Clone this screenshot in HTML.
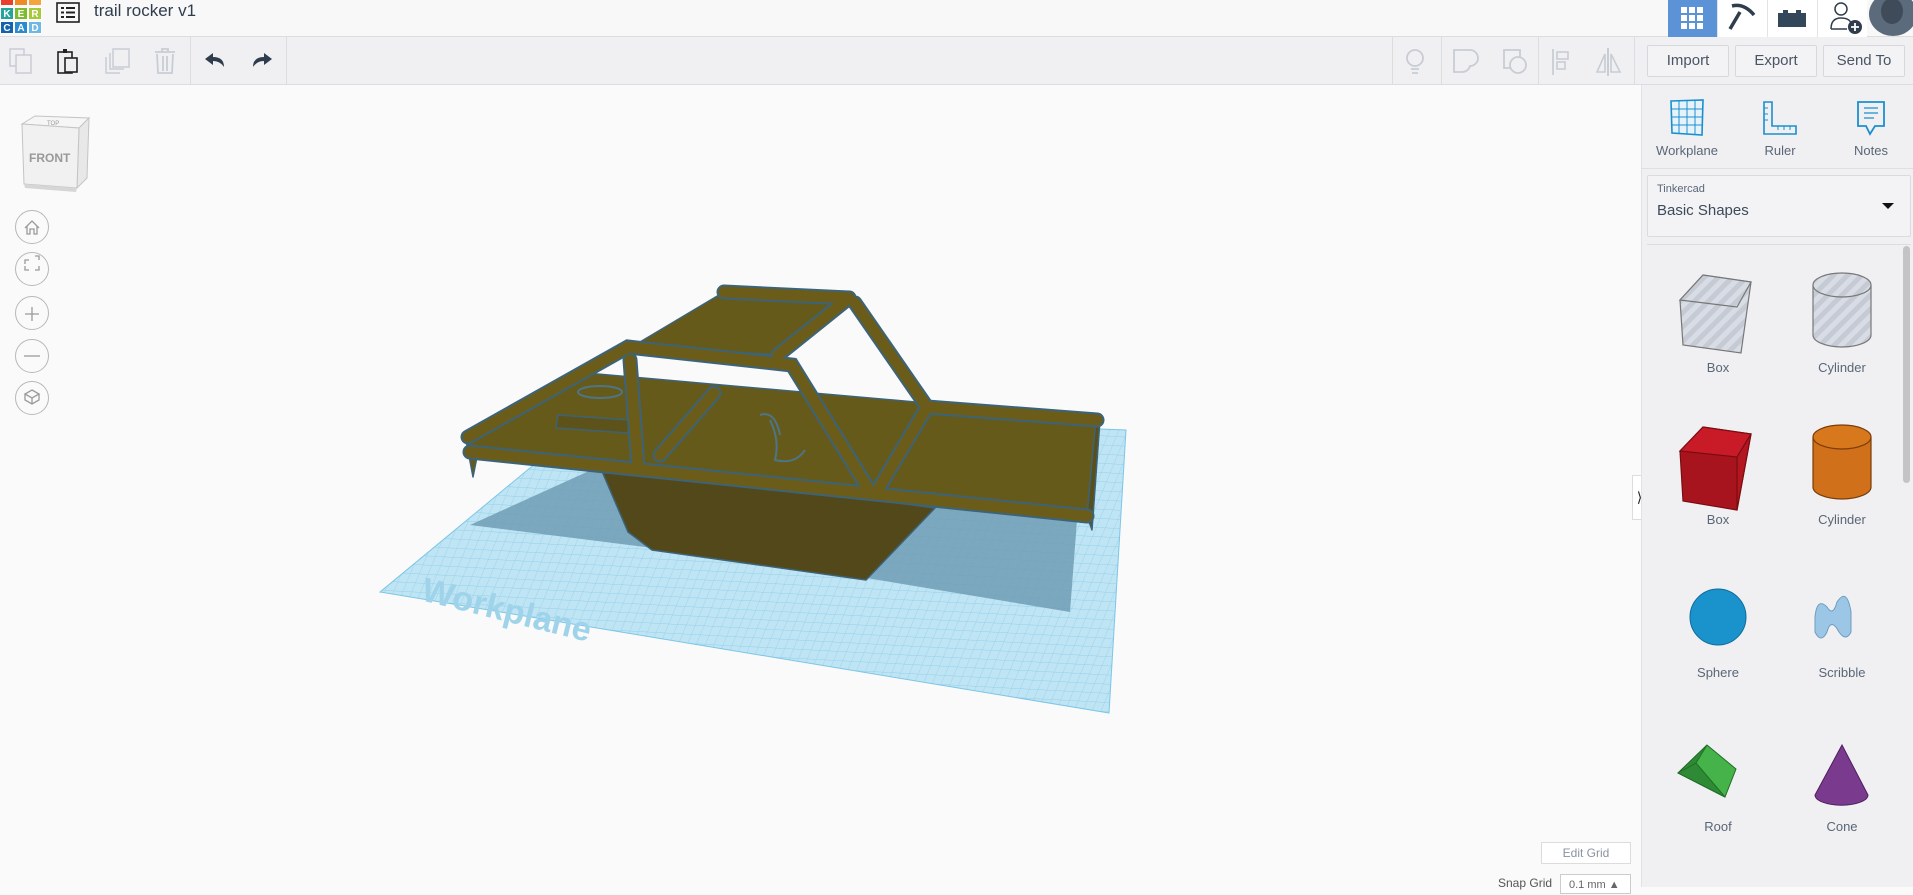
<!DOCTYPE html>
<html><head><meta charset="utf-8">
<style>
*{box-sizing:border-box;margin:0;padding:0}
body{width:1913px;height:887px;overflow:hidden;background:#fafafa;font-family:"Liberation Sans",sans-serif;position:relative;color:#3c4a5a}
.abs{position:absolute}
#top{left:0;top:0;width:1913px;height:37px;background:#f8f8f8;border-bottom:1px solid #dcdde0}
#tool{left:0;top:37px;width:1913px;height:48px;background:#f0f0f3;border-bottom:1px solid #dcdde0}
.tile{position:absolute;width:14px;height:13px;color:#fff;font-size:10px;font-weight:bold;text-align:center;line-height:13px;border:1px solid #fff}
.btn{position:absolute;top:45px;height:32px;border:1px solid #d6d8dc;border-radius:2px;background:#f3f3f6;font-size:15px;color:#4a5564;text-align:center;line-height:30px}
#panel{left:1641px;top:85px;width:272px;height:802px;background:#f0f0f3;border-left:1px solid #e2e2e6}
.lbl{position:absolute;font-size:13px;color:#5a6676;text-align:center;width:120px}
.circ{position:absolute;left:15px;width:34px;height:34px;border:1px solid #b8b8b8;border-radius:50%;background:#fafafa}
.sep{position:absolute;top:37px;width:1px;height:48px;background:#dcdde0}
</style></head><body>
<div id="top" class="abs"></div>
<div class="tile" style="left:0;top:-7px;background:#e8402d"></div>
<div class="tile" style="left:14px;top:-7px;background:#f08a24"></div>
<div class="tile" style="left:28px;top:-7px;background:#f4a43a"></div>
<div class="tile" style="left:0;top:7px;background:#26a39c">K</div>
<div class="tile" style="left:14px;top:7px;background:#7dbb2f">E</div>
<div class="tile" style="left:28px;top:7px;background:#a6c93a">R</div>
<div class="tile" style="left:0;top:21px;background:#1464ad">C</div>
<div class="tile" style="left:14px;top:21px;background:#2a8bd0">A</div>
<div class="tile" style="left:28px;top:21px;background:#6db8e4">D</div>
<svg class="abs" style="left:56px;top:2px" width="24" height="21" viewBox="0 0 24 21"><rect x="1" y="1" width="22" height="19" fill="none" stroke="#222" stroke-width="1.6"/><path d="M5 6h3M10 6h9M5 10.5h3M10 10.5h9M5 15h3M10 15h9" stroke="#222" stroke-width="2"/></svg>
<div class="abs" style="left:94px;top:1px;font-size:17px;color:#2f3d4d">trail rocker v1</div>
<!-- top right -->
<div class="abs" style="left:1668px;top:0;width:49px;height:37px;background:#5b93d6"></div>
<svg class="abs" style="left:1680px;top:6px" width="26" height="24"><g fill="#fff"><rect x="1" y="1" width="6" height="6"/><rect x="9" y="1" width="6" height="6"/><rect x="17" y="1" width="6" height="6"/><rect x="1" y="9" width="6" height="6"/><rect x="9" y="9" width="6" height="6"/><rect x="17" y="9" width="6" height="6"/><rect x="1" y="17" width="6" height="6"/><rect x="9" y="17" width="6" height="6"/><rect x="17" y="17" width="6" height="6"/></g></svg>
<div class="abs" style="left:1717px;top:0;width:50px;height:37px;background:#fff;border-left:1px solid #e4e4e4"></div>
<svg class="abs" style="left:1726px;top:3px" width="32" height="30"><path d="M6 3 Q18 0 28 12 M14 9 L4 26" stroke="#2f3d4d" stroke-width="3.5" fill="none"/></svg>
<div class="abs" style="left:1767px;top:0;width:50px;height:37px;background:#fff;border-left:1px solid #e4e4e4"></div>
<svg class="abs" style="left:1778px;top:9px" width="28" height="18"><path d="M0 4h5V1h5v3h8V1h5v3h5v14H0z" fill="#33475b"/></svg>
<div class="abs" style="left:1817px;top:0;width:50px;height:37px;background:#fff;border-left:1px solid #e4e4e4"></div>
<svg class="abs" style="left:1829px;top:1px" width="34" height="34"><circle cx="12" cy="8" r="6" fill="none" stroke="#2f3d4d" stroke-width="1.5"/><path d="M2 28 Q2 17 12 17 Q20 17 22 22 M2 28h16" fill="none" stroke="#2f3d4d" stroke-width="1.5"/><circle cx="26" cy="26" r="7" fill="#2f3d4d"/><path d="M26 22v8M22 26h8" stroke="#fff" stroke-width="1.8"/></svg>
<div class="abs" style="left:1869px;top:-8px;width:48px;height:44px;border-radius:50%;background:#5c6b7c;overflow:hidden"><div style="margin:6px 0 0 12px;width:22px;height:26px;border-radius:50%;background:#3f4b58"></div></div>
<!-- toolbar -->
<div id="tool" class="abs"></div>
<svg class="abs" style="left:8px;top:47px" width="28" height="28"><rect x="2" y="2" width="14" height="17" fill="none" stroke="#c8cdd4" stroke-width="1.5"/><rect x="8" y="8" width="15" height="18" fill="#f0f0f3" stroke="#c8cdd4" stroke-width="1.5"/></svg>
<svg class="abs" style="left:56px;top:47px" width="26" height="28"><rect x="2" y="5" width="14" height="21" fill="none" stroke="#222" stroke-width="1.6"/><rect x="7" y="2" width="4" height="4" fill="#222"/><rect x="9" y="11" width="12" height="14" fill="#f0f0f3" stroke="#222" stroke-width="1.6"/></svg>
<svg class="abs" style="left:103px;top:47px" width="28" height="28"><rect x="10" y="2" width="16" height="18" fill="none" stroke="#c8cdd4" stroke-width="1.5"/><path d="M7 6v16h14M3 10v16h14" fill="none" stroke="#c8cdd4" stroke-width="1.5"/></svg>
<svg class="abs" style="left:152px;top:46px" width="26" height="30"><path d="M3 6h20M10 6V3h6v3M5 8l1 19h14l1-19M11 10v15M15 10v15" fill="none" stroke="#c8cdd4" stroke-width="1.8"/></svg>
<div class="sep" style="left:190px"></div>
<svg class="abs" style="left:203px;top:51px" width="24" height="20"><path d="M2 8 L10 2 V6 Q21 6 21 16 Q17 10 10 10 V14z" fill="#2f3d4d"/></svg>
<svg class="abs" style="left:250px;top:51px" width="24" height="20"><path d="M22 8 L14 2 V6 Q3 6 3 16 Q7 10 14 10 V14z" fill="#2f3d4d"/></svg>
<div class="sep" style="left:286px"></div>
<svg class="abs" style="left:1403px;top:47px" width="24" height="30"><circle cx="12" cy="11" r="8" fill="none" stroke="#c8cdd4" stroke-width="1.8"/><path d="M8 22h8M9 26h6" stroke="#c8cdd4" stroke-width="1.8"/></svg>
<div class="sep" style="left:1392px"></div><div class="sep" style="left:1441px"></div>
<svg class="abs" style="left:1452px;top:48px" width="28" height="28"><path d="M2 2h16a8 8 0 0 1-0 16 8 8 0 0 1-8 6H2z" fill="none" stroke="#c8cdd4" stroke-width="1.8"/></svg>
<svg class="abs" style="left:1502px;top:48px" width="28" height="28"><rect x="2" y="2" width="16" height="18" fill="none" stroke="#c8cdd4" stroke-width="1.8"/><circle cx="16" cy="17" r="8" fill="#f0f0f3" stroke="#c8cdd4" stroke-width="1.8"/></svg>
<div class="sep" style="left:1538px"></div>
<svg class="abs" style="left:1551px;top:48px" width="24" height="28"><path d="M2 1v26" stroke="#c8cdd4" stroke-width="1.8"/><rect x="6" y="4" width="11" height="7" fill="none" stroke="#c8cdd4" stroke-width="1.6"/><rect x="6" y="14" width="8" height="7" fill="none" stroke="#c8cdd4" stroke-width="1.6"/></svg>
<svg class="abs" style="left:1594px;top:46px" width="30" height="32"><path d="M14 2v28" stroke="#c8cdd4" stroke-width="2"/><path d="M11 8 L3 26h8z M17 8 L26 26h-9z" fill="none" stroke="#c8cdd4" stroke-width="1.6"/></svg>
<div class="sep" style="left:1634px"></div>
<div class="btn" style="left:1647px;width:82px">Import</div>
<div class="btn" style="left:1735px;width:82px">Export</div>
<div class="btn" style="left:1823px;width:82px">Send To</div>
<!-- left controls -->
<svg class="abs" style="left:17px;top:112px" width="78" height="85"><path d="M5 12 L18 4 L72 6 L62 16z" fill="#f6f6f6" stroke="#c4c4c4"/><path d="M62 16 L72 6 L70 66 L60 76z" fill="#e8e8e8" stroke="#c4c4c4"/><path d="M5 12 L62 16 L60 76 L7 72z" fill="#f1f1f1" stroke="#c4c4c4"/><path d="M7 72 L60 76 L59 80 L8 76z" fill="#d6d6d6"/><text x="12" y="50" font-size="12" font-weight="bold" fill="#999" font-family="Liberation Sans">FRONT</text><text x="30" y="13" font-size="6" fill="#999">TOP</text></svg>
<div class="circ" style="top:210px"></div><div class="circ" style="top:252px"></div><div class="circ" style="top:296px"></div><div class="circ" style="top:339px"></div><div class="circ" style="top:381px"></div>
<svg class="abs" style="left:15px;top:210px" width="34" height="210" fill="none" stroke="#9a9a9a" stroke-width="1.3"><path d="M10 18 L17 11 L24 18 M12 16v8h3v-5h4v5h3v-8"/><path d="M10 54v-4h4M20 46h4v4M24 56v4h-4M14 60h-4v-4"/><path d="M17 97v14M10 104h14"/><path d="M9 146h16"/><path d="M17 180 L24 184 L17 188 L10 184z M10 184v6l7 4 7-4v-6 M17 188v6"/></svg>
<!-- scene -->
<svg class="abs" style="left:0;top:85px" width="1641" height="802" viewBox="0 85 1641 802">
<defs><pattern id="g" width="9" height="9" patternUnits="userSpaceOnUse" patternTransform="skewX(-20) rotate(3)"><rect width="9" height="9" fill="#bfe4f4"/><path d="M0 0h9M0 0v9" stroke="#8fcfe9" stroke-width="0.8"/></pattern></defs>
<polygon points="380,592 600,410 1126,430 1109,713" fill="url(#g)" stroke="#7cc6e6"/>
<polygon points="470,525 600,466 1077,520 1070,612 861,577 645,547" fill="#6f9db4" opacity="0.85"/>
<text x="420" y="600" font-size="34" font-weight="bold" fill="#9fd3ea" transform="rotate(14 420 600)" font-family="Liberation Sans">Workplane</text>
<g stroke="#3d6378" stroke-width="1.5" stroke-linejoin="round">
<polygon points="598,462 935,508 866,580 652,550 628,532" fill="#52481a"/>
<polygon points="466,437 586,373 1097,418 1087,516 468,452" fill="#665a1a"/>
<polygon points="466,440 473,477 478,452" fill="#665a1a"/>
<polygon points="1087,516 1096,418 1100,420 1092,530" fill="#5a4f18"/>
<polygon points="724,292 849,298 778,355 635,345" fill="#665a1a"/>
<polygon points="558,415 630,420 628,433 556,428" fill="#5d5219"/>
</g>
<g stroke="#3d6378" stroke-width="15" stroke-linecap="round" fill="none">
<path d="M468,437 L628,347 L792,365 L871,493"/><path d="M630,360 L638,467"/><path d="M855,303 L927,407 L876,493"/><path d="M849,298 L778,355"/><path d="M470,452 L1087,516"/><path d="M714,393 L660,455"/><path d="M724,292 L849,298"/><path d="M927,407 L1097,420"/>
</g>
<g stroke="#6b5d19" stroke-width="11" stroke-linecap="round" fill="none">
<path d="M468,437 L628,347 L792,365 L871,493"/><path d="M630,360 L638,467"/><path d="M855,303 L927,407 L876,493"/><path d="M849,298 L778,355"/><path d="M470,452 L1087,516"/><path d="M714,393 L660,455"/><path d="M724,292 L849,298"/><path d="M927,407 L1097,420"/>
</g>
<path d="M770,420 q10,20 5,40 q20,5 30,-10 M760,415 q15,-5 20,20" stroke="#4e7488" fill="none" stroke-width="2"/>
<ellipse cx="600" cy="392" rx="22" ry="6" fill="none" stroke="#4e7488" stroke-width="2"/>
</svg>
<div class="abs" style="left:1632px;top:475px;width:15px;height:45px;background:#fff;border:1px solid #ddd;font-size:14px;line-height:43px;text-align:center;color:#222">&#x27E9;</div>
<div class="abs" style="left:1541px;top:842px;width:90px;height:22px;border:1px solid #dcdcdc;background:#fff;font-size:12px;color:#8a93a0;text-align:center;line-height:20px">Edit Grid</div>
<div class="abs" style="left:1498px;top:876px;font-size:12px;color:#555">Snap Grid</div>
<div class="abs" style="left:1560px;top:874px;width:71px;height:20px;border:1px solid #ccc;background:#fff;font-size:11px;color:#666;padding-left:8px;line-height:20px">0.1 mm &#9650;</div>
<!-- panel -->
<div id="panel" class="abs"></div>
<svg class="abs" style="left:1669px;top:99px" width="36" height="38"><path d="M2 2 L34 1 L33 36 L3 34z" fill="#e6f3fa" stroke="#1b8fce" stroke-width="1.6"/><path d="M10 2v33M18 2v33M26 1v35M2 10h32M2 18h32M3 26h31" stroke="#1b8fce" stroke-width="1"/></svg>
<div class="lbl" style="left:1627px;top:143px">Workplane</div>
<svg class="abs" style="left:1762px;top:100px" width="36" height="36"><path d="M2 2h8v24h24v8H2z" fill="none" stroke="#1b8fce" stroke-width="1.6"/><path d="M2 8h4M2 14h4M2 20h4M16 30v-4M22 30v-4M28 30v-4" stroke="#1b8fce"/></svg>
<div class="lbl" style="left:1720px;top:143px">Ruler</div>
<svg class="abs" style="left:1855px;top:100px" width="32" height="38"><path d="M3 2h26v24H20l-5 8-4-8H3z" fill="none" stroke="#1b8fce" stroke-width="1.8"/><path d="M9 8h14M9 13h14M9 18h10" stroke="#1b8fce" stroke-width="1.2"/></svg>
<div class="lbl" style="left:1811px;top:143px">Notes</div>
<div class="abs" style="left:1641px;top:168px;width:272px;height:1px;background:#dedfe3"></div>
<div class="abs" style="left:1647px;top:175px;width:264px;height:62px;border:1px solid #dadbe0;border-radius:2px;background:#f3f3f6"></div>
<div class="abs" style="left:1657px;top:183px;font-size:11px;color:#5a6676">Tinkercad</div>
<div class="abs" style="left:1657px;top:202px;font-size:15px;color:#3c4a5a">Basic Shapes</div>
<div class="abs" style="left:1882px;top:203px;width:0;height:0;border-left:6px solid transparent;border-right:6px solid transparent;border-top:6px solid #111"></div>
<div class="abs" style="left:1647px;top:244px;width:264px;height:1px;background:#dcdde2"></div>
<div class="abs" style="left:1903px;top:246px;width:7px;height:237px;border-radius:4px;background:#c4c4c6"></div>
<svg class="abs" style="left:1641px;top:245px" width="262" height="642">
<defs><pattern id="st" width="10" height="10" patternUnits="userSpaceOnUse" patternTransform="rotate(45)"><rect width="10" height="10" fill="#c6cad4"/><rect width="5" height="10" fill="#d8dce5"/></pattern></defs>
<g stroke="#777" stroke-width="1.2"><path d="M39 55 L62 30 L110 37 L100 108 L42 100z" fill="url(#st)"/><path d="M39 55 L62 30 L110 37 L96 62z" fill="url(#st)"/></g>
<g stroke="#777" stroke-width="1.2"><path d="M172 40 v50 a29 12 0 0 0 58 0 v-50" fill="url(#st)"/><ellipse cx="201" cy="40" rx="29" ry="12" fill="url(#st)"/></g>
<g stroke="#7a0d12" stroke-width="1.2"><path d="M39 206 L62 182 L110 189 L96 265 L42 256z" fill="#a8141d"/><path d="M39 206 L62 182 L110 189 L96 212z" fill="#c81b27"/><path d="M96 212 L110 189 L96 265z" fill="#b3161f"/></g>
<g stroke="#7a3c08" stroke-width="1.2"><path d="M172 192 v50 a29 12 0 0 0 58 0 v-50" fill="#d0701a"/><ellipse cx="201" cy="192" rx="29" ry="12" fill="#d8781c"/></g>
<circle cx="77" cy="372" r="28" fill="#1a92cc" stroke="#0f6c9b"/>
<path d="M174 372 q2 -20 12 -10 q6 10 10 -5 q10 -15 14 10 v20 q-5 10 -12 0 q-8 -15 -12 0 q-6 12 -12 0z" fill="#9cc6e6" stroke="#6f9dbf"/>
<path d="M37 528 L66 500 L95 524 L84 552z" fill="#45b24a" stroke="#1f6e24"/><path d="M37 528 L66 500 L55 518z M37 528 L55 518 L84 552z" fill="#2f8a35" stroke="#1f6e24"/>
<path d="M201 500 L227 550 a26 10 0 0 1 -53 0z" fill="#7a3a8e" stroke="#4e1f5e"/>
</svg>
<div class="lbl" style="left:1658px;top:360px">Box</div><div class="lbl" style="left:1782px;top:360px">Cylinder</div>
<div class="lbl" style="left:1658px;top:512px">Box</div><div class="lbl" style="left:1782px;top:512px">Cylinder</div>
<div class="lbl" style="left:1658px;top:665px">Sphere</div><div class="lbl" style="left:1782px;top:665px">Scribble</div>
<div class="lbl" style="left:1658px;top:819px">Roof</div><div class="lbl" style="left:1782px;top:819px">Cone</div>
</body></html>
